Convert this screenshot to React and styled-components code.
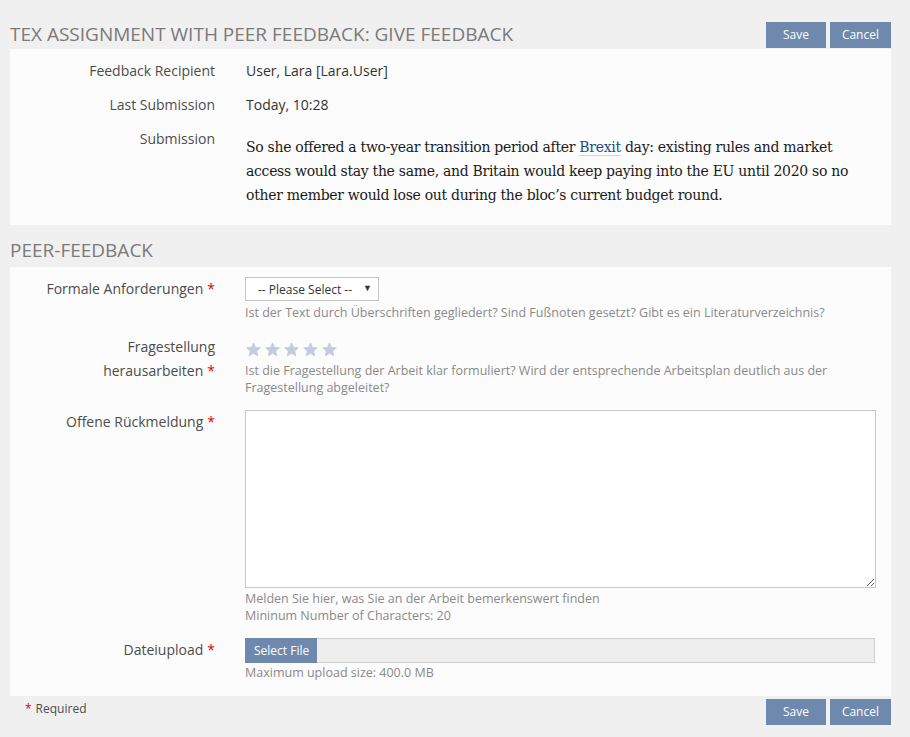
import React from "react";
import styled, { createGlobalStyle } from "styled-components";

const Global = createGlobalStyle`
  html, body { margin: 0; padding: 0; background: #f0f0f0; }
  body { font-family: "Open Sans", "Noto Sans", sans-serif; color: #4c4c4c; }
  * { box-sizing: border-box; }
`;

const Page = styled.div`
  width: 910px;
  padding: 0 19px 12px 10px;
`;

const HeaderRow = styled.div`
  display: flex;
  align-items: flex-end;
  justify-content: space-between;
  height: ${(p) => p.$height}px;
  padding-bottom: ${(p) => p.$bottom || 0}px;
`;

const Title = styled.h1`
  margin: 0 0 ${(p) => p.$mb || 0}px 0;
  font-size: 19px;
  font-weight: 400;
  line-height: 26px;
  color: #7a7a7a;
  text-transform: uppercase;
  letter-spacing: 0;
`;

const ButtonGroup = styled.div`
  display: flex;
  gap: 4px;
`;

const Button = styled.button`
  height: 26px;
  padding: 0 12px;
  border: none;
  background: #6e89ad;
  color: #fff;
  font-family: "Open Sans", sans-serif;
  font-size: 12px;
  line-height: 26px;
  min-width: ${(p) => p.$w}px;
  cursor: pointer;
`;

const Panel = styled.div`
  background: #fcfcfc;
  padding: 10px 15px ${(p) => p.$pb}px 0;
  display: flex;
  flex-direction: column;
  gap: ${(p) => p.$gap}px;
`;

const Row = styled.div`
  display: grid;
  grid-template-columns: 205px 1fr;
  column-gap: ${(p) => (p.$form ? 30 : 31)}px;
  align-items: start;
`;

const Label = styled.div`
  text-align: right;
  font-size: 14px;
  line-height: 24px;
  color: #4c4c4c;
`;

const Value = styled.div`
  font-size: 14px;
  line-height: 24px;
  color: #333;
`;

const Req = styled.span`
  color: #e20000;
  margin-left: ${(p) => (p.$lead ? 0 : 4)}px;
  margin-right: ${(p) => (p.$lead ? 4 : 0)}px;
`;

const SubmissionText = styled.p`
  margin: 8px 0 8px 0;
  font-family: "DejaVu Serif", "Liberation Serif", serif;
  font-size: 14px;
  line-height: 24px;
  color: #1a1a1a;
  letter-spacing: -0.3px;
`;

const Link = styled.a`
  color: #1d4d7c;
  text-decoration: none;
  border-bottom: 1px solid #d6d6d6;
`;

const Field = styled.div`
  display: flex;
  flex-direction: column;
`;

const Select = styled.div`
  width: 134px;
  height: 24px;
  border: 1px solid #c6c6c6;
  background: #fff;
  display: flex;
  align-items: center;
  justify-content: space-between;
  padding: 0 6px 0 12px;
  font-size: 12px;
  color: #333;
`;

const Caret = styled.span`
  font-size: 9px;
  color: #333;
  margin-top: -3px;
`;

const Help = styled.div`
  font-size: 12.5px;
  line-height: 17px;
  color: #8a8a8a;
  margin-top: ${(p) => p.$mt || 0}px;
`;

const Stars = styled.div`
  display: flex;
  gap: 4px;
  height: 27px;
  align-items: center;
  padding-left: 1px;
  padding-top: 2px;
`;

const TextArea = styled.textarea`
  width: 631px;
  height: 178px;
  border: 1px solid #c8c8c8;
  background: #fff;
  resize: both;
  display: block;
  margin: 0;
  font-family: inherit;
`;

const FileInput = styled.div`
  width: 630px;
  height: 25px;
  border: 1px solid #cfcfcf;
  background: #eeeeee;
  display: flex;
`;

const FileButton = styled.div`
  background: #6e89ad;
  color: #fff;
  font-size: 12px;
  padding: 0 8px 0 9px;
  margin: -1px 0 -1px -1px;
  height: 25px;
  display: flex;
  align-items: center;
`;

const Footer = styled.div`
  display: flex;
  justify-content: space-between;
  align-items: flex-start;
  padding-top: 3px;
`;

const Required = styled.div`
  font-size: 12px;
  line-height: 20px;
  padding-left: 15px;
  color: #4c4c4c;
`;

const Star = () => (
  <svg width="15" height="15" viewBox="0 0 24 24">
    <path
      d="M12 1.5l3.1 7.1 7.7.7-5.8 5.1 1.7 7.6L12 18l-6.7 4 1.7-7.6L1.2 9.3l7.7-.7z"
      fill="#c5cbdc"
      stroke="#c5cbdc"
      strokeWidth="1.5"
      strokeLinejoin="round"
    />
  </svg>
);

export default function App() {
  return (
    <Page>
      <Global />
      <HeaderRow $height={49} $bottom={1}>
        <Title $mb={1}>TeX Assignment with Peer Feedback: Give Feedback</Title>
        <ButtonGroup>
          <Button $w={60}>Save</Button>
          <Button $w={60}>Cancel</Button>
        </ButtonGroup>
      </HeaderRow>
      <Panel $gap={10} $pb={10}>
        <Row>
          <Label>Feedback Recipient</Label>
          <Value>User, Lara [Lara.User]</Value>
        </Row>
        <Row>
          <Label>Last Submission</Label>
          <Value>Today, 10:28</Value>
        </Row>
        <Row>
          <Label>Submission</Label>
          <SubmissionText>
            So she offered a two-year transition period after <Link>Brexit</Link> day:
            existing rules and market access would stay the same, and Britain would
            keep paying into the EU until 2020 so no other member would lose out
            during the bloc’s current budget round.
          </SubmissionText>
        </Row>
      </Panel>
      <HeaderRow $height={42} $bottom={4}>
        <Title>Peer-Feedback</Title>
      </HeaderRow>
      <Panel $gap={14} $pb={15}>
        <Row $form>
          <Label>
            Formale Anforderungen<Req>*</Req>
          </Label>
          <Field>
            <Select>
              <span>-- Please Select --</span>
              <Caret>▼</Caret>
            </Select>
            <Help $mt={3}>
              Ist der Text durch Überschriften gegliedert? Sind Fußnoten gesetzt? Gibt es
              ein Literaturverzeichnis?
            </Help>
          </Field>
        </Row>
        <Row $form>
          <Label>
            Fragestellung
            <br />
            herausarbeiten<Req>*</Req>
          </Label>
          <Field>
            <Stars>
              <Star />
              <Star />
              <Star />
              <Star />
              <Star />
            </Stars>
            <Help>
              Ist die Fragestellung der Arbeit klar formuliert? Wird der entsprechende
              Arbeitsplan deutlich aus der Fragestellung abgeleitet?
            </Help>
          </Field>
        </Row>
        <Row $form>
          <Label>
            Offene Rückmeldung<Req>*</Req>
          </Label>
          <Field>
            <TextArea />
            <Help $mt={2}>
              Melden Sie hier, was Sie an der Arbeit bemerkenswert finden
              <br />
              Mininum Number of Characters: 20
            </Help>
          </Field>
        </Row>
        <Row $form>
          <Label>
            Dateiupload<Req>*</Req>
          </Label>
          <Field>
            <FileInput>
              <FileButton>Select File</FileButton>
            </FileInput>
            <Help $mt={1}>Maximum upload size: 400.0 MB</Help>
          </Field>
        </Row>
      </Panel>
      <Footer>
        <Required>
          <Req $lead>*</Req>Required
        </Required>
        <ButtonGroup>
          <Button $w={60}>Save</Button>
          <Button $w={60}>Cancel</Button>
        </ButtonGroup>
      </Footer>
    </Page>
  );
}
